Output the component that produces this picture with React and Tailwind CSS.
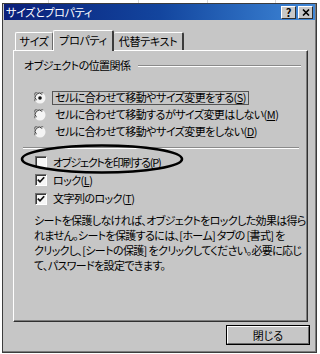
import React from 'react';

const font = "font-['Noto_Sans_CJK_JP','Noto_Sans',sans-serif] [font-feature-settings:'palt']";

function Radio({ checked }) {
  return (
    <svg width="12" height="12" viewBox="0 0 12 12" className="shrink-0">
      <circle cx="6" cy="6" r="5.5" fill="#f4f4f4" />
      <path d="M1.2 9 A5 5 0 0 1 9 1.2" fill="none" stroke="#7a7a7a" strokeWidth="1.2" />
      <path d="M2.4 8.2 A4 4 0 0 1 8.2 2.4" fill="none" stroke="#3a3a3a" strokeWidth="1" />
      {checked && <circle cx="6" cy="6" r="1.8" fill="#111" />}
    </svg>
  );
}

function Check({ checked }) {
  return (
    <span className="w-[12px] h-[12px] shrink-0 bg-[#f6f6f6] border-t border-l border-t-[#6e6e6e] border-l-[#6e6e6e] border-r border-b border-r-white border-b-white shadow-[inset_1px_1px_0_#3a3a3a] flex items-center justify-center">
      {checked && (
        <svg width="8" height="8" viewBox="0 0 8 8">
          <path d="M0.8 3.6 L3 5.8 L7.2 1.2" fill="none" stroke="#111" strokeWidth="1.7" />
        </svg>
      )}
    </span>
  );
}

function TitleButton({ children }) {
  return (
    <span className="w-[15px] h-[13px] bg-[#c8c8c8] border-t border-l border-t-white border-l-white border-r border-b border-r-[#303030] border-b-[#303030] flex items-center justify-center text-[11px] leading-none font-bold text-black">
      {children}
    </span>
  );
}

export default function App() {
  return (
    <div className={`relative w-[320px] h-[354px] bg-white pt-[3px] pl-[2px] overflow-hidden text-black ${font}`}>
      {/* spreadsheet grid behind the dialog */}
      <div className="absolute top-0 left-[48px] w-px h-[3px] bg-[#d8d8d8]" />
      <div className="absolute top-0 left-[138px] w-px h-[3px] bg-[#d8d8d8]" />
      <div className="absolute top-0 left-[207px] w-px h-[3px] bg-[#d8d8d8]" />
      <div className="absolute top-0 left-[275px] w-px h-[3px] bg-[#d8d8d8]" />

      {/* DIALOG */}
      <div className="w-[315px] h-[350px] bg-[#c6c6c6] border border-[#3c3c3c] shadow-[inset_-1px_-1px_0_#7c7c7c] px-[1px]">
        {/* TITLE BAR */}
        <div className="h-[16px] flex items-center justify-between bg-gradient-to-r from-[#0b1f7a] via-[#13459e] to-[#4088d8] pl-[2px] pr-[2px]">
          <span className="text-white text-[11px] leading-none tracking-[-0.3px]">サイズとプロパティ</span>
          <div className="flex gap-[2px]">
            <TitleButton>?</TitleButton>
            <TitleButton>
              <svg width="8" height="7" viewBox="0 0 8 7">
                <path d="M1 0.5 L7 6.5 M7 0.5 L1 6.5" stroke="#000" strokeWidth="1.6" />
              </svg>
            </TitleButton>
          </div>
        </div>

        {/* TABS */}
        <div className="mt-[10px] ml-[11px] h-[20px] flex items-end text-[11px] leading-none tracking-[-0.3px]">
          <div className="w-[38px] h-[18px] border-t border-l border-t-white border-l-white border-r border-r-[#6a6a6a] rounded-t-[2px] flex items-center justify-center">
            サイズ
          </div>
          <div className="relative z-10 -mb-px w-[61px] h-[21px] bg-[#c6c6c6] border-t border-l border-t-white border-l-white border-r-2 border-r-[#3c3c3c] rounded-t-[2px] flex items-center justify-center pb-[2px]">
            プロパティ
          </div>
          <div className="w-[70px] h-[18px] border-t border-t-white border-r-2 border-r-[#3c3c3c] rounded-t-[2px] flex items-center justify-center">
            代替テキスト
          </div>
        </div>

        {/* PANEL */}
        <div className="relative ml-[9px] w-[295px] h-[272px] border-t border-l border-t-white border-l-white border-r border-b border-r-[#303030] border-b-[#303030] shadow-[inset_-1px_-1px_0_#7c7c7c] text-[11px] tracking-[-0.55px]">
          <div className="mt-[7px] ml-[10px] flex items-center h-[15px]">
            <span className="whitespace-nowrap">オブジェクトの位置関係</span>
            <div className="flex-1 ml-[8px] mr-[6px] h-[2px] border-t border-t-[#8a8a8a] border-b border-b-white" />
          </div>

          <div className="mt-[16px] flex flex-col">
            <div className="h-[17px] flex items-center pl-[20px]">
              <Radio checked />
              <span className="ml-[6px] px-[2px] h-[14px] flex items-center border border-[#555] whitespace-nowrap">
                セルに合わせて移動やサイズ変更をする(<span className="underline">S</span>)
              </span>
            </div>
            <div className="h-[17px] flex items-center pl-[20px]">
              <Radio />
              <span className="ml-[9px] whitespace-nowrap">
                セルに合わせて移動するがサイズ変更はしない(<span className="underline">M</span>)
              </span>
            </div>
            <div className="h-[17px] flex items-center pl-[20px]">
              <Radio />
              <span className="ml-[9px] whitespace-nowrap">
                セルに合わせて移動やサイズ変更をしない(<span className="underline">D</span>)
              </span>
            </div>
          </div>

          <div className="mt-[7px] ml-[9px] mr-[8px] h-[2px] border-t border-t-[#8a8a8a] border-b border-b-white" />

          <div className="mt-[4px] flex flex-col">
            <div className="h-[18px] flex items-center pl-[21px]">
              <Check />
              <span className="ml-[6px] whitespace-nowrap tracking-[-1.2px]">
                オブジェクトを印刷する(<span className="underline">P</span>)
              </span>
            </div>
            <div className="h-[18px] flex items-center pl-[21px]">
              <Check checked />
              <span className="ml-[6px] whitespace-nowrap">
                ロック(<span className="underline">L</span>)
              </span>
            </div>
            <div className="h-[19px] flex items-center pl-[21px]">
              <Check checked />
              <span className="ml-[6px] whitespace-nowrap">
                文字列のロック(<span className="underline">T</span>)
              </span>
            </div>
          </div>

          <div className="mt-[5px] ml-[20px] leading-[15px] tracking-[-0.65px] whitespace-nowrap">
            <div>シートを保護しなければ、オブジェクトをロックした効果は得ら</div>
            <div>れません。シートを保護するには、[ホーム] タブの [書式] を</div>
            <div>クリックし、[シートの保護] をクリックしてください。必要に応じ</div>
            <div>て、パスワードを設定できます。</div>
          </div>

          {/* annotation ellipse */}
          <svg className="absolute left-[6px] top-[93px] pointer-events-none" width="166" height="30" viewBox="0 0 166 30">
            <ellipse cx="82" cy="15" rx="80" ry="13.5" fill="none" stroke="#000" strokeWidth="2.6" />
          </svg>
        </div>

        {/* BUTTON ROW */}
        <div className="mt-[3px] ml-[222px] w-[84px] h-[20px] border border-black flex">
          <div className="flex-1 border-t border-l border-t-white border-l-white border-r border-b border-r-[#6a6a6a] border-b-[#6a6a6a] flex items-center justify-center text-[11px] leading-none">
            閉じる
          </div>
        </div>
      </div>
    </div>
  );
}
